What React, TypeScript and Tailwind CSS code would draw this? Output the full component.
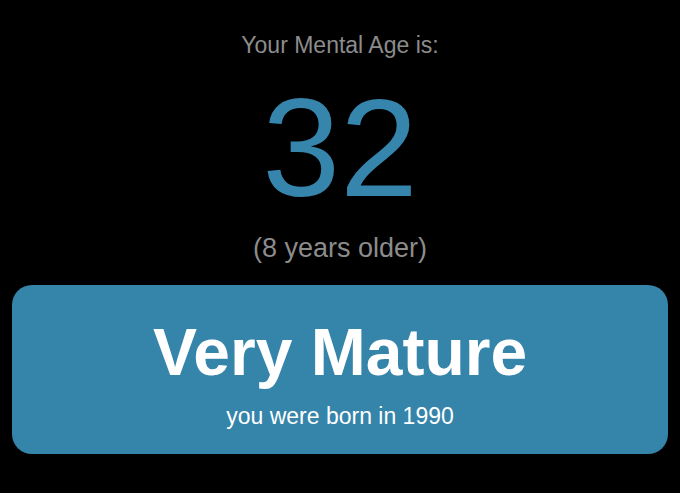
export default function App() {
  return (
    <div
      className="w-[680px] h-[493px] bg-black flex flex-col items-center overflow-hidden"
      style={{ fontFamily: '"Liberation Sans", Arial, sans-serif' }}
    >
      <div className="mt-[34px] text-[23px] leading-none text-[#8c8c8c]">Your Mental Age is:</div>
      <div className="mt-[21px] text-[140px] leading-none text-[#3585ad]">32</div>
      <div className="mt-[17px] text-[27px] leading-none text-[#8c8c8c]">(8 years older)</div>
      <div className="mt-[23px] w-[656px] h-[169px] rounded-[20px] bg-[#3584aa] flex flex-col items-center">
        <div className="mt-[34px] text-[66px] leading-none font-bold text-white">Very Mature</div>
        <div className="mt-[20px] text-[23px] leading-none text-white">you were born in 1990</div>
      </div>
    </div>
  );
}
